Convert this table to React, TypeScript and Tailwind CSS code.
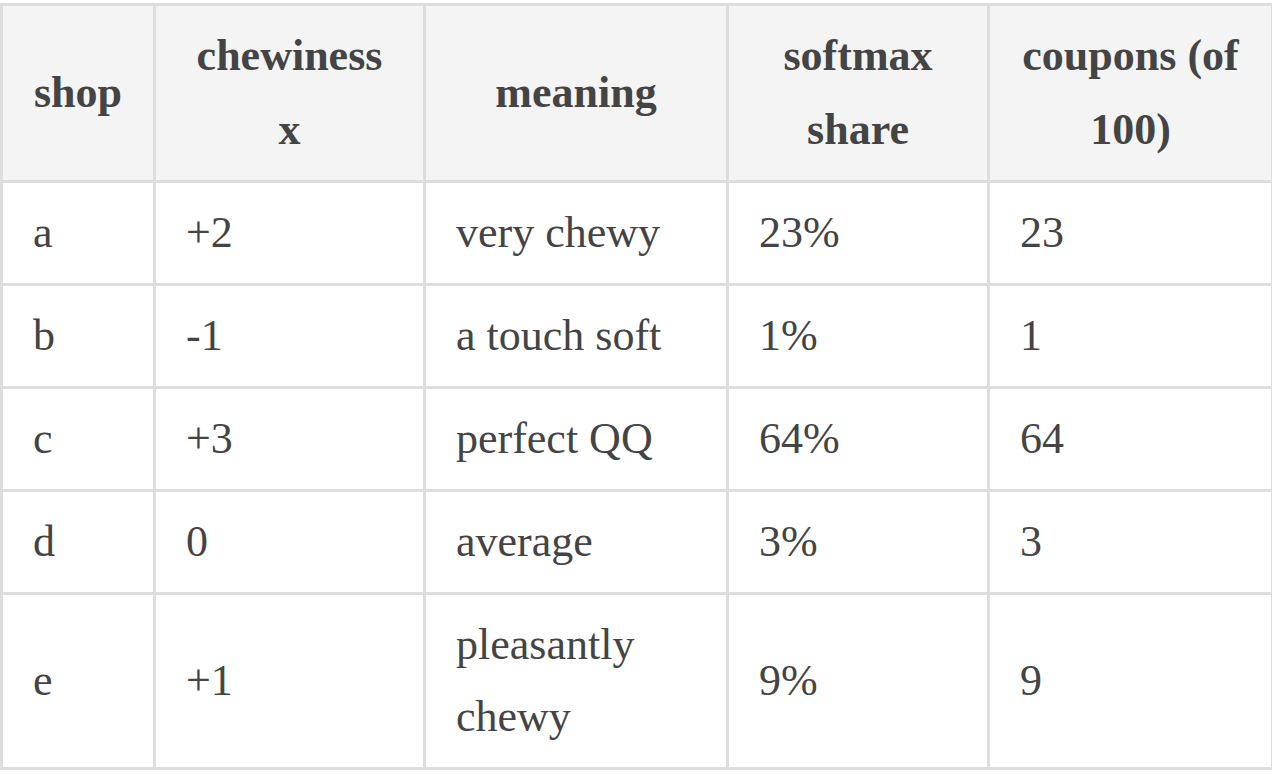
const headers = ["shop", "chewiness x", "meaning", "softmax share", "coupons (of 100)"];

const rows = [
  { shop: "a", x: "+2", meaning: "very chewy", share: "23%", coupons: "23" },
  { shop: "b", x: "-1", meaning: "a touch soft", share: "1%", coupons: "1" },
  { shop: "c", x: "+3", meaning: "perfect QQ", share: "64%", coupons: "64" },
  { shop: "d", x: "0", meaning: "average", share: "3%", coupons: "3" },
  { shop: "e", x: "+1", meaning: "pleasantly chewy", share: "9%", coupons: "9" },
];

export default function App() {
  return (
    <div className="bg-white min-h-screen pt-[3px] font-['Liberation_Serif',serif] text-[#444]">
      <table className="w-[1271px] table-fixed border-collapse text-[44px]">
        <colgroup>
          <col className="w-[153px]" />
          <col className="w-[270px]" />
          <col className="w-[303px]" />
          <col className="w-[261px]" />
          <col className="w-[284px]" />
        </colgroup>
        <thead>
          <tr className="bg-[#f4f4f4]">
            {headers.map((h) => (
              <th
                key={h}
                className="border-[3px] border-[#dddddd] px-[30px] py-[13px] text-center font-bold leading-[74px] align-middle"
              >
                {h}
              </th>
            ))}
          </tr>
        </thead>
        <tbody>
          {rows.map((r) => (
            <tr key={r.shop}>
              {[r.shop, r.x, r.meaning, r.share, r.coupons].map((v, i) => (
                <td
                  key={i}
                  className="border-[3px] border-[#dddddd] px-[30px] py-[14px] text-left leading-[72px] align-middle"
                >
                  {v}
                </td>
              ))}
            </tr>
          ))}
        </tbody>
      </table>
    </div>
  );
}
